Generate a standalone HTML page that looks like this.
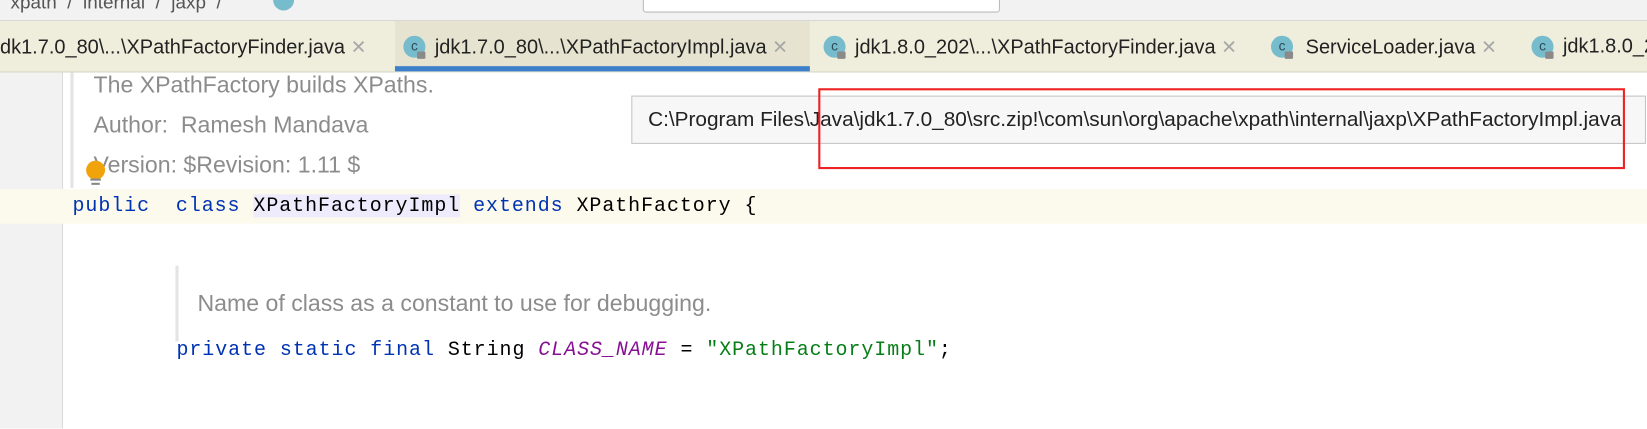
<!DOCTYPE html>
<html><head><meta charset="utf-8"><style>
*{margin:0;padding:0;box-sizing:border-box}
body{width:1647px;height:408px;overflow:hidden;background:#fff;position:relative;font-family:"Liberation Sans",sans-serif}
#w{position:absolute;left:0;top:0;width:1568px;height:389px;transform:scale(1.0504);transform-origin:0 0}
.abs{position:absolute;white-space:nowrap}
.tb{left:0;top:0;width:1568px;height:20px;background:#f2f2f2;border-bottom:1px solid #d8d8d8}
.tabs{left:0;top:20px;width:1568px;height:49px;background:#efeedc;border-bottom:1px solid #d6d6c8}
.tab{top:20px;height:48px;font-size:19px;color:#222;line-height:50px}
.ic{position:absolute;width:21px;height:21px;border-radius:50%;background:#77bccd;top:14px;font-size:13px;color:#2a4a55;line-height:20px;text-align:center}
.lk{position:absolute;width:8px;height:7px;background:#8a8a8a;left:13px;top:15px;border-radius:1px}
.x{color:#a8a8a8;font-size:18px}
.gut{left:0;top:69px;width:60px;height:339px;background:#f2f2f2;border-right:1px solid #dcdcdc}
.code{font-family:"Liberation Mono",monospace;font-size:19px;letter-spacing:0.9px;color:#000;white-space:pre}
.kw{color:#0033b3}
.doc{font-size:22px;color:#8c8c8c}
</style></head><body><div id="w">
<div class="abs tb"></div>
<div class="abs" style="left:10px;top:-8px;font-size:18px;color:#555">xpath &nbsp;/&nbsp; internal &nbsp;/&nbsp; jaxp &nbsp;/&nbsp;</div>
<div class="abs" style="left:260px;top:-10px;width:20px;height:20px;border-radius:50%;background:#77bccd"></div>
<div class="abs" style="left:612px;top:-4px;width:340px;height:16px;background:#fff;border:1px solid #bbb;border-radius:3px"></div>
<div class="abs tabs"></div>
<div class="abs" style="left:376px;top:20px;width:395px;height:49px;background:#e6e4d0"></div>
<div class="abs" style="left:376px;top:63px;width:395px;height:5px;background:#3d7fc9"></div>
<div class="abs tab" style="left:0">dk1.7.0_80\...\XPathFactoryFinder.java <span class="x">&#x2715;</span></div>
<div class="abs tab" style="left:384px"><span class="ic" style="left:0">c<span class="lk"></span></span><span style="margin-left:30px">jdk1.7.0_80\...\XPathFactoryImpl.java</span> <span class="x">&#x2715;</span></div>
<div class="abs tab" style="left:784px"><span class="ic" style="left:0">c<span class="lk"></span></span><span style="margin-left:30px">jdk1.8.0_202\...\XPathFactoryFinder.java</span> <span class="x">&#x2715;</span></div>
<div class="abs tab" style="left:1210px"><span class="ic" style="left:0">c<span class="lk"></span></span><span style="margin-left:33px">ServiceLoader.java</span> <span class="x">&#x2715;</span></div>
<div class="abs tab" style="left:1458px"><span class="ic" style="left:0">c<span class="lk"></span></span><span style="margin-left:30px">jdk1.8.0_2</span></div>
<div class="abs gut"></div>
<div class="abs" style="left:60px;top:180px;width:1587px;height:33px;background:#fcfaed"></div>
<div class="abs" style="left:0;top:180px;width:60px;height:33px;background:#fcfaed"></div>
<div class="abs" style="left:67px;top:69px;width:3px;height:110px;background:#e4e4e4"></div>
<div class="abs doc" style="left:89px;top:68px">The XPathFactory builds XPaths.</div>
<div class="abs doc" style="left:89px;top:106px">Author:&nbsp; Ramesh Mandava</div>
<div class="abs doc" style="left:89px;top:144px">Version: $Revision: 1.11 $</div>
<div class="abs" style="left:82px;top:153px;width:18px;height:18px;border-radius:50%;background:#f0a30a"></div>
<div class="abs" style="left:86px;top:170px;width:10px;height:2px;background:#888"></div>
<div class="abs" style="left:87px;top:174px;width:8px;height:2px;background:#888"></div>
<div class="abs code" style="left:69px;top:185px"><span class="kw">public</span>  <span class="kw">class</span> <span style="background:#edebfc">XPathFactoryImpl</span> <span class="kw">extends</span> XPathFactory {</div>
<div class="abs" style="left:167px;top:253px;width:3px;height:72px;background:#e4e4e4"></div>
<div class="abs doc" style="left:188px;top:276px">Name of class as a constant to use for debugging.</div>
<div class="abs code" style="left:168px;top:322px"><span class="kw">private static final</span> String <i style="color:#871094">CLASS_NAME</i> = <span style="color:#067d17">"XPathFactoryImpl"</span>;</div>
<div class="abs" style="left:601px;top:91px;width:966px;height:46px;background:#f7f7f7;border:1px solid #c4c4c4"></div>
<div class="abs" style="left:617px;top:103px;font-size:19.8px;color:#222">C:\Program Files\Java\jdk1.7.0_80\src.zip!\com\sun\org\apache\xpath\internal\jaxp\XPathFactoryImpl.java</div>
<div class="abs" style="left:779px;top:84px;width:768px;height:77px;border:2px solid #ee2222"></div>
</div></body></html>
